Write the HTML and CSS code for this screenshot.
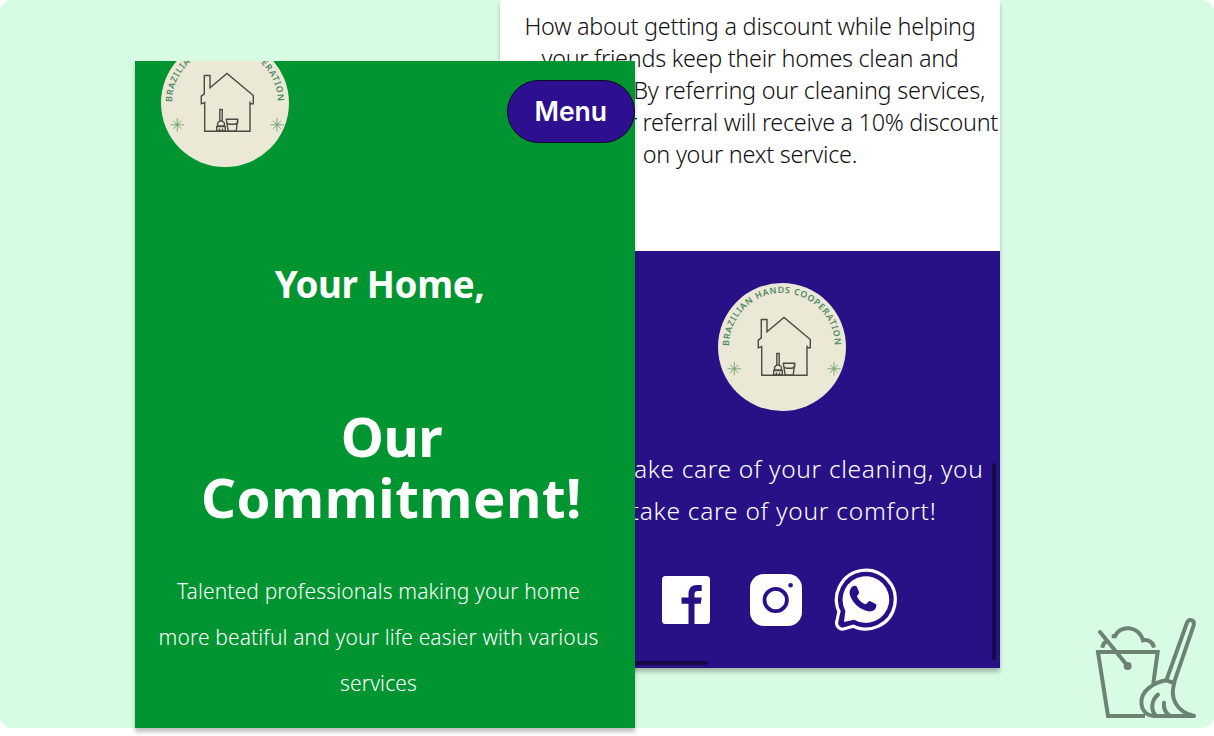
FILE: index.html
```
<!DOCTYPE html>
<html lang="en">
<head>
<meta charset="utf-8">
<title>Brazilian Hands Cooperation</title>
<link rel="stylesheet" href="styles.css">
</head>
<body>
<svg class="defs" width="0" height="0" aria-hidden="true">
  <symbol id="logo" viewBox="0 0 128 128">
    <circle cx="64" cy="64" r="64" fill="#ebe8d6"/>
    <path id="arc" d="M11.200 63a52.800 53 0 0 1 105.600 0" fill="none"/>
    <text class="logo-text"><textPath href="#arc" textLength="165">BRAZILIAN HANDS COOPERATION</textPath></text>
    <g fill="none" stroke="#4b4b43" stroke-width="1.4">
      <path d="M43.3 54.8V36.500H49v12.3L66 34.500l26.3 22v8.3H89v27.400H43.700V63.500l-3.400 1.300v-7.600zM89 62.500v3"/>
      <path d="M58.8 82V70.500h2.400V82M56.600 84l2.200-2h2.400l2.200 2v3h-6.800zM55.700 87.500h8.600v4.500h-8.600zM58.500 89.500v2.500M61.500 89.500v2.500M65.300 80.300h11.400l-1.500 11.800h-8zM66 84.200l2.500 1h5.500l2-1M76.700 80.300v4"/>
    </g>
    <g id="star" stroke="#7eab78" stroke-width="1">
      <path d="M16.300 79v13.500M9.600 85.800h13.500M12.300 81.800l8 8M20.300 81.800l-8 8"/>
      <circle cx="16.300" cy="85.800" r="1.500" fill="#7eab78" stroke="none"/>
    </g>
    <use href="#star" x="99.700"/>
  </symbol>
</svg>
<main class="stage">
  <section class="screen screen-back">
    <div class="referral">
      <p class="line">How about getting a discount while helping</p>
      <p class="line line-friends">your friends keep their homes clean and</p>
      <p class="line line-services">healthy? By referring our cleaning services,</p>
      <p class="line line-discount">you and your referral will receive a 10% discount</p>
      <p class="line">on your next service.</p>
    </div>
    <footer class="footer">
      <svg class="logo"><use href="#logo"/></svg>
      <div class="slogan">
        <p class="line">We take care of your cleaning, you</p>
        <p class="line line-comfort">take care of your comfort!</p>
      </div>
      <div class="social">
        <svg class="facebook" viewBox="0 0 48 48"><rect width="48" height="48" rx="3.500" fill="#fff"/><path d="M26.500 48V27.700h-7v-6.200h7v-3.300c0-6 3.200-9.200 8.500-9.200h4.700v6h-3.500c-2.700 0-3.700 1-3.700 3.500v3h7.200l-1 6.200h-6.200V48z" fill="#281186"/></svg>
        <svg class="instagram" viewBox="0 0 52 52"><rect width="52" height="52" rx="14" fill="#fff"/><circle cx="25.700" cy="26" r="11.200" fill="none" stroke="#281186" stroke-width="3.800"/><circle cx="40.600" cy="11.200" r="2.300" fill="#281186"/></svg>
        <svg class="whatsapp" viewBox="553 26 189 189">
          <g stroke-linejoin="round">
            <path d="M587 154A70 70 0 1 1 613 181L579 191Z" fill="#fff" stroke="#fff" stroke-width="46"/>
            <path d="M587 154A70 70 0 1 1 613 181L579 191Z" fill="#fff" stroke="#281186" stroke-width="27"/>
            <path d="M587 154A70 70 0 1 1 613 181L583 188Z" fill="#fff"/>
          </g>
          <path d="M603 88q4-10 14-9q4 0 6 6l5 13q1 4-2 7q-5 5-4 7q7 14 24 23q3 1 10-8q3-3 6-1l15 7q4 2 3 6q-1 11-10 15q-11 5-25-1q-28-11-41-38q-8-17-1-27z" fill="#281186"/>
        </svg>
      </div>
    </footer>
    <span class="scrollbar scrollbar-y"></span>
    <span class="scrollbar scrollbar-x"></span>
  </section>
  <section class="screen screen-front">
    <header class="topbar">
      <svg class="logo"><use href="#logo"/></svg>
      <button class="menu">Menu</button>
    </header>
    <h2 class="subtitle">Your Home,</h2>
    <h1 class="title"><span class="title-our">Our</span><br>Commitment!</h1>
    <p class="intro">Talented professionals making your home<br>more beatiful and your life easier with various<br>services</p>
  </section>
  <svg class="mop" viewBox="0 0 387 378" fill="none" stroke="#6c8374" stroke-width="12">
    <path d="M180 318H69L39 126H218L205 220"/>
    <path d="M45 66L128 168" stroke-linecap="round"/>
    <circle cx="128" cy="168" r="12" fill="#6c8374" stroke="none"/>
    <path d="M52 113Q54 98 68 92M80 79H90C103 45 161 44 174 91C190 88 204 96 207 113"/>
    <path d="M244 211L306 38Q311 27 321 31Q329 35 326 46L267 218" stroke-linejoin="round"/>
    <path d="M243 211L268 219C254 262 272 304 327 318H205C160 312 159 258 193 233Q211 217 243 211Z" stroke-linejoin="round"/>
    <path d="M219 254C198 271 197 300 212 316M237 278Q234 302 253 316" stroke-linecap="round"/>
  </svg>
</main>
</body>
</html>
```
FILE: styles.css
```
* { box-sizing: border-box; }
body { margin: 0; min-height: 736px; background: #fff; font-family: "Noto Sans", sans-serif; font-weight: 300; }
h1, h2, p { margin: 0; }
.defs { position: absolute; }
.logo-text { font: 600 8.800px "Noto Sans", sans-serif; fill: #4f8a66; }
.logo { display: block; width: 128px; height: 128px; flex: none; }

.stage { position: relative; width: 1214px; height: 728px; border-radius: 12px; background: #d8fce3; }
.screen { position: absolute; width: 500px; box-shadow: 0 4px 4px rgba(0, 0, 0, .25); }
.line { white-space: nowrap; }

/* referral page, partly covered by the front screen */
.screen-back { left: 500px; top: 0; height: 668px; display: flex; flex-direction: column; background: #fff; }
.referral { height: 251px; padding-top: 10px; font-size: 23.400px; line-height: 32px; letter-spacing: -.23px; color: #111; text-align: center; }
.line-friends { letter-spacing: -.28px; }
.line-services { padding-right: 15px; text-align: right; }
.line-discount { display: flex; justify-content: flex-end; padding-right: 2px; letter-spacing: -.3px; }
.footer { flex: 1; display: flex; flex-direction: column; align-items: center; padding: 32px 0 0 64px; background: #281186; color: #fff; }
.slogan { margin-top: 36.500px; padding-left: 1px; font-size: 24.500px; line-height: 42px; letter-spacing: .65px; text-align: center; }
.line-comfort { padding-left: 2px; letter-spacing: .75px; }
.social { display: flex; align-items: center; margin-top: 36.500px; padding-right: 5px; }
.facebook { width: 48px; height: 48px; }
.instagram { width: 52px; height: 52px; margin-left: 40px; }
.whatsapp { width: 63px; height: 63px; margin-left: 32px; }
.scrollbar { position: absolute; border-radius: 2px; background: #150a45; }
.scrollbar-y { right: 4px; top: 463px; width: 4px; height: 197px; }
.scrollbar-x { left: 4px; bottom: 3.500px; width: 204px; height: 4px; }

/* landing page */
.screen-front { left: 135px; top: 61px; height: 667px; display: flex; flex-direction: column; background: #009530; color: #fff; text-align: center; }
.topbar { display: flex; justify-content: space-between; align-items: flex-end; height: 105.500px; padding-left: 26px; overflow: hidden; }
.menu { align-self: flex-start; width: 128.500px; height: 63px; margin-top: 19px; padding: 0 0 2px; border: 1px solid #0c0826; border-radius: 32px; background: #2d0f90; color: #fff; font: 600 26.500px Inter, sans-serif; }
.subtitle { margin-top: 92.500px; padding-right: 11px; font-size: 36.800px; font-weight: 700; line-height: 50px; letter-spacing: -.4px; }
.title { margin-top: 96.500px; padding-left: 13px; font-size: 54.500px; font-weight: 700; line-height: 61.700px; letter-spacing: .5px; }
.title-our { letter-spacing: -.5px; }
.intro { margin-top: 39px; padding-right: 13px; font-size: 21px; line-height: 46px; letter-spacing: .13px; }

.mop { position: absolute; left: 1085px; top: 610px; width: 129px; height: 126px; }
```
